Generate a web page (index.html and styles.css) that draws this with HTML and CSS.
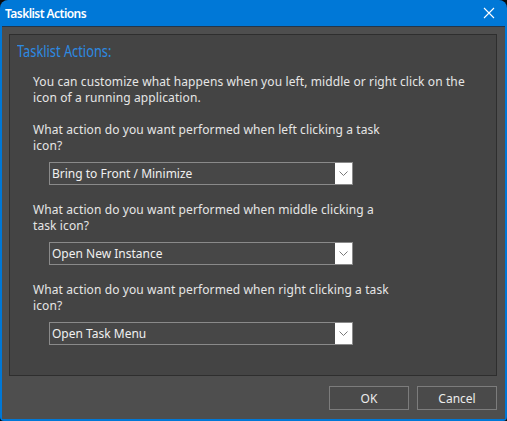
FILE: index.html
```html
<!DOCTYPE html>
<html>
<head>
<meta charset="utf-8">
<link rel="stylesheet" href="styles.css">
</head>
<body>
<div class="window">
  <div class="titlebar">
    <span class="title">Tasklist Actions</span>
    <svg class="close" width="12" height="12" viewBox="0 0 12 12"><path d="M1 1 L11 11 M11 1 L1 11" stroke="#ffffff" stroke-width="1.1" fill="none"/></svg>
  </div>
  <div class="body">
    <div class="panel">
      <div class="heading"><span class="heading-text">Tasklist Actions:</span></div>
      <div class="content">
        <p class="text">You can customize what happens when you left, middle or right click on the<br>icon of a running application.</p>
        <p class="text">What action do you want performed when left clicking a task<br>icon?</p>
        <div class="combo"><span class="value">Bring to Front / Minimize</span><span class="arrow"><svg width="9" height="5" viewBox="0 0 9 5"><path d="M0.5 0.5 L4.5 4.5 L8.5 0.5" stroke="#7a7a7a" stroke-width="1" fill="none"/></svg></span></div>
        <p class="text">What action do you want performed when middle clicking a<br>task icon?</p>
        <div class="combo"><span class="value">Open New Instance</span><span class="arrow"><svg width="9" height="5" viewBox="0 0 9 5"><path d="M0.5 0.5 L4.5 4.5 L8.5 0.5" stroke="#7a7a7a" stroke-width="1" fill="none"/></svg></span></div>
        <p class="text">What action do you want performed when right clicking a task<br>icon?</p>
        <div class="combo"><span class="value">Open Task Menu</span><span class="arrow"><svg width="9" height="5" viewBox="0 0 9 5"><path d="M0.5 0.5 L4.5 4.5 L8.5 0.5" stroke="#7a7a7a" stroke-width="1" fill="none"/></svg></span></div>
      </div>
    </div>
    <div class="buttons">
      <div class="btn">OK</div>
      <div class="btn">Cancel</div>
    </div>
  </div>
</div>
</body>
</html>
```
FILE: styles.css
```css
html, body {
  margin: 0;
  padding: 0;
  background: #0a0a0a;
}
body {
  width: 507px;
  height: 421px;
  overflow: hidden;
  font-family: "Noto Sans", "Open Sans", sans-serif;
}
.window {
  width: 507px;
  height: 421px;
  box-sizing: border-box;
  background: #0078d7;
  border-radius: 8px 8px 4px 4px;
  padding: 0 2px 2px 2px;
  display: flex;
  flex-direction: column;
}
.titlebar {
  height: 26px;
  display: flex;
  align-items: center;
  justify-content: space-between;
  padding: 0 10px 0 3px;
  border-bottom: 1px solid #23364a;
}
.title {
  color: #ffffff;
  font-size: 12px;
  font-weight: 600;
  letter-spacing: -0.55px;
}
.close {
  display: block;
}
.body {
  flex: 1;
  background: #4e4e4e;
  padding: 7px 8px 9px 7px;
  display: flex;
  flex-direction: column;
}
.panel {
  height: 342px;
  box-sizing: border-box;
  background: #444444;
  border: 1px solid #2e2e2e;
  padding: 7px 0 0 7px;
}
.heading {
  height: 18px;
  line-height: 18px;
}
.heading-text {
  display: inline-block;
  color: #2d8ae2;
  font-size: 16px;
  transform: scaleX(0.8);
  transform-origin: left center;
}
.content {
  padding: 14px 0 0 16px;
}
.text {
  margin: 0;
  color: #e6e6e6;
  font-size: 12px;
  line-height: 16px;
  letter-spacing: 0.1px;
}
.text + .combo {
  margin-top: 8px;
}
.content .text:first-child + .text {
  margin-top: 16px;
}
.combo + .text {
  margin-top: 17px;
}
.combo {
  margin-left: 16px;
  width: 304px;
  height: 23px;
  box-sizing: border-box;
  border: 1px solid #8a8a8a;
  background: #474747;
  display: flex;
  align-items: stretch;
}
.value {
  flex: 1;
  color: #f0f0f0;
  font-size: 12px;
  line-height: 21px;
  padding-left: 2px;
}
.arrow {
  width: 17px;
  background: #ffffff;
  display: flex;
  align-items: center;
  justify-content: center;
}
.buttons {
  margin-top: 10px;
  display: flex;
  justify-content: flex-end;
  gap: 8px;
}
.btn {
  width: 80px;
  height: 24px;
  box-sizing: border-box;
  border: 1px solid #7c7c7c;
  background: #4a4a4a;
  color: #ececec;
  font-size: 12px;
  display: flex;
  align-items: center;
  justify-content: center;
}
```
